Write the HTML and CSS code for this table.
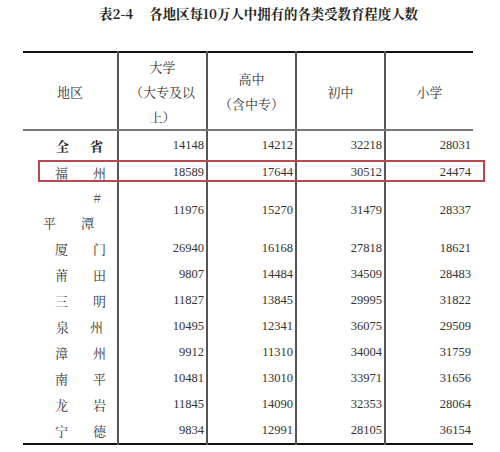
FILE: index.html
```html
<!DOCTYPE html>
<html lang="zh">
<head>
<meta charset="utf-8">
<link rel="stylesheet" href="styles.css">
</head>
<body>
<div class="title">表2-4<span class="gap"></span>各地区每10万人中拥有的各类受教育程度人数</div>
<div class="wrap">
<table class="data">
  <colgroup>
    <col class="c1"><col class="c2"><col class="c3"><col class="c4"><col class="c5">
  </colgroup>
  <thead>
    <tr class="head">
      <th>地区</th>
      <th>大学<br>（大专及以<br>上）</th>
      <th>高中<br>（含中专）</th>
      <th>初中</th>
      <th>小学</th>
    </tr>
  </thead>
  <tbody>
    <tr class="r-first"><td class="reg bold wide"><span>全</span><span>省</span></td><td>14148</td><td>14212</td><td>32218</td><td>28031</td></tr>
    <tr><td class="reg"><span>福</span><span>州</span></td><td>18589</td><td>17644</td><td>30512</td><td>24474</td></tr>
    <tr class="r-double"><td class="reg2"><div class="mark">#</div><div class="pair"><span>平</span><span>潭</span></div></td><td>11976</td><td>15270</td><td>31479</td><td>28337</td></tr>
    <tr><td class="reg"><span>厦</span><span>门</span></td><td>26940</td><td>16168</td><td>27818</td><td>18621</td></tr>
    <tr><td class="reg"><span>莆</span><span>田</span></td><td>9807</td><td>14484</td><td>34509</td><td>28483</td></tr>
    <tr><td class="reg"><span>三</span><span>明</span></td><td>11827</td><td>13845</td><td>29995</td><td>31822</td></tr>
    <tr><td class="reg wide"><span>泉</span><span>州</span></td><td>10495</td><td>12341</td><td>36075</td><td>29509</td></tr>
    <tr><td class="reg"><span>漳</span><span>州</span></td><td>9912</td><td>11310</td><td>34004</td><td>31759</td></tr>
    <tr><td class="reg"><span>南</span><span>平</span></td><td>10481</td><td>13010</td><td>33971</td><td>31656</td></tr>
    <tr><td class="reg"><span>龙</span><span>岩</span></td><td>11845</td><td>14090</td><td>32353</td><td>28064</td></tr>
    <tr><td class="reg"><span>宁</span><span>德</span></td><td>9834</td><td>12991</td><td>28105</td><td>36154</td></tr>
  </tbody>
</table>
<div class="highlight"></div>
</div>
</body>
</html>
```

FILE: styles.css
```css
html, body {
  margin: 0;
  padding: 0;
  background: #ffffff;
}
body {
  width: 500px;
  height: 452px;
  overflow: hidden;
  font-family: "Noto Serif CJK SC", "Noto Sans CJK SC", serif;
  color: #333333;
}
.title {
  height: 28px;
  line-height: 28px;
  text-align: center;
  padding-left: 17px;
  font-size: 13.4px;
  font-weight: bold;
  color: #222222;
  white-space: nowrap;
}
.title .gap {
  display: inline-block;
  width: 16px;
}
.wrap {
  position: relative;
  margin-top: 23px;
  width: 500px;
}
.data {
  margin-left: 23px;
  width: 450px;
  table-layout: fixed;
  border-collapse: collapse;
  border-top: 2px solid #111111;
  border-bottom: 2px solid #111111;
  font-size: 13px;
}
.c1 { width: 95px; }
.c2 { width: 89px; }
.c3 { width: 89px; }
.c4 { width: 89px; }
.c5 { width: 88px; }
.data th, .data td {
  padding: 0;
  border-left: 2px solid #555555;
  border-right: 2px solid #555555;
}
.data th:first-child, .data td:first-child { border-left: none; }
.data th:last-child, .data td:last-child { border-right: none; }
.head th {
  height: 76px;
  font-weight: normal;
  line-height: 25px;
  text-align: center;
  vertical-align: middle;
  border-bottom: 2px solid #777777;
  color: #333333;
}
.data td {
  height: 26px;
  text-align: right;
  vertical-align: middle;
  padding-right: 2px;
  font-family: "Liberation Serif", "Noto Serif CJK SC", serif;
  font-size: 12.5px;
  color: #333333;
}
.r-first td { height: 28px; }
.r-double td { height: 50px; }
.data td.reg, .data td.reg2 {
  font-family: "Noto Serif CJK SC", "Noto Sans CJK SC", serif;
  font-size: 13px;
  text-align: left;
}
.data td.reg {
  padding-left: 32px;
  padding-right: 11px;
}
.reg span {
  display: inline-block;
}
.reg span + span {
  float: right;
}
.data td.reg.wide {
  padding-left: 33px;
  padding-right: 14px;
}
.data td.bold { font-weight: bold; color: #222222; }
.data td.reg2 {
  padding-left: 20px;
  padding-right: 23px;
  line-height: 25px;
}
.reg2 .mark {
  text-align: right;
  padding-right: 0;
  margin-right: -7px;
}
.reg2 .pair {
  display: flex;
  justify-content: space-between;
}
.highlight {
  position: absolute;
  left: 38px;
  top: 109px;
  width: 443px;
  height: 18px;
  border: 2px solid #b8474f;
}
```
